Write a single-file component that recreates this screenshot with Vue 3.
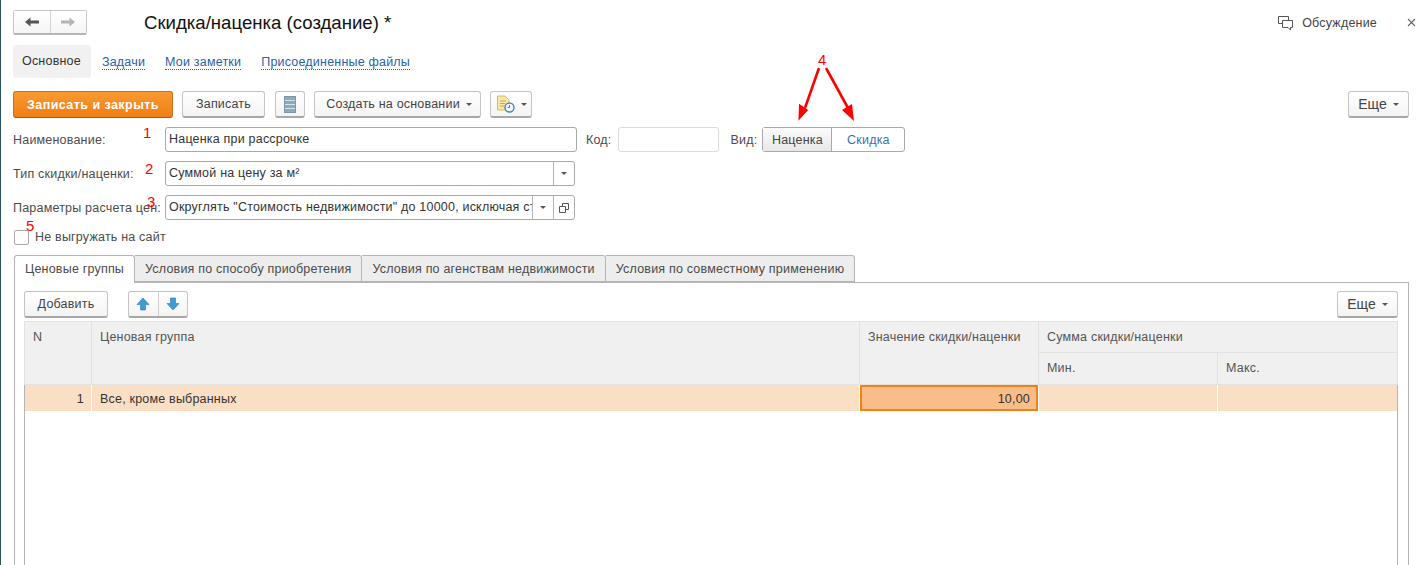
<template>
  <div class="page">
    <header class="title-row">
      <div class="nav-group">
        <button class="nav-btn">
          <svg width="16" height="12" viewBox="0 0 16 12"><path d="M1 6 6.5 1.5V4.5H15V7.5H6.5V10.500Z" fill="#555"/></svg>
        </button>
        <button class="nav-btn">
          <svg width="16" height="12" viewBox="0 0 16 12"><path d="M15 6 9.5 1.5V4.5H1V7.5H9.5V10.500Z" fill="#b4b4b4"/></svg>
        </button>
      </div>
      <h1 class="title">Скидка/наценка (создание) *</h1>
      <div class="discuss">
        <svg width="17" height="16" viewBox="0 0 17 16" fill="#fff" stroke="#555" stroke-width="1">
          <path d="M1.5 1.5H11.5V8.5H1.5Z"/>
          <path d="M5.5 5.5H15.5V12.5H13.5V15L11 12.5H5.5Z"/>
        </svg>
        <span>Обсуждение</span>
      </div>
      <svg class="close" width="9" height="9" viewBox="0 0 9 9"><path d="M1 1 8 8M8 1 1 8" stroke="#666" stroke-width="1.1"/></svg>
    </header>

    <nav class="sections">
      <span class="section active">Основное</span>
      <a v-for="link in links" :key="link" class="section link">{{ link }}</a>
    </nav>

    <div class="toolbar">
      <button class="btn primary">Записать и закрыть</button>
      <button class="btn save">Записать</button>
      <button class="btn icon-btn">
        <svg width="12" height="17" viewBox="0 0 12 17">
          <rect x="0.5" y="0.5" width="11" height="16" fill="#8eaabd" stroke="#7d98ac"/>
          <path d="M1 4.5H11M1 8.5H11M1 12.5H11" stroke="#d8e4ec" stroke-width="1"/>
        </svg>
      </button>
      <button class="btn create">Создать на основании<i class="caret"></i></button>
      <button class="btn report">
        <svg width="19" height="18" viewBox="0 0 19 18">
          <path d="M1.5 1H9L13 5V15H1.5Z" fill="#f8e7a8" stroke="#d8b860"/>
          <path d="M4 6H10M4 8.5H9M4 11H8" stroke="#c9a550"/>
          <circle cx="13.5" cy="12.5" r="4.500" fill="#f4f8fc" stroke="#4a86b8" stroke-width="1.4"/>
          <path d="M13.500 10V12.500" stroke="#d0473a"/>
          <path d="M13.500 12.500H11.500" stroke="#4a86b8"/>
        </svg>
        <i class="caret"></i>
      </button>
      <button class="btn more top-more">Еще<i class="caret"></i></button>
    </div>

    <div class="field-row">
      <label class="field-label">Наименование:</label>
      <div class="input name-input"><span>Наценка при рассрочке</span></div>
      <label class="code-label">Код:</label>
      <div class="input code-input"></div>
      <label class="kind-label">Вид:</label>
      <div class="toggle">
        <span class="toggle-item selected">Наценка</span>
        <span class="toggle-item">Скидка</span>
      </div>
    </div>

    <div class="field-row">
      <label class="field-label">Тип скидки/наценки:</label>
      <div class="input wide-input">
        <span class="value">Суммой на цену за м²</span>
        <span class="suffix"><i class="caret"></i></span>
      </div>
    </div>

    <div class="field-row">
      <label class="field-label">Параметры расчета цен:</label>
      <div class="input wide-input">
        <span class="value">Округлять "Стоимость недвижимости" до 10000, исключая стоимость</span>
        <span class="suffix"><i class="caret"></i></span>
        <span class="suffix">
          <svg width="10" height="10" viewBox="0 0 10 10" fill="#fff" stroke="#555">
            <path d="M3.5 .5H9.500V6.500H3.5Z"/>
            <path d="M.5 3.500H6.500V9.500H.5Z"/>
          </svg>
        </span>
      </div>
    </div>

    <div class="check-row">
      <span class="checkbox"></span>
      <span>Не выгружать на сайт</span>
    </div>

    <div class="tabs">
      <span v-for="(tab, i) in tabs" :key="tab" class="tab" :class="{ current: i === 0 }">{{ tab }}</span>
    </div>

    <section class="panel">
      <div class="panel-bar">
        <button class="btn add">Добавить</button>
        <div class="btn move-group">
          <span class="move">
            <svg width="14" height="14" viewBox="0 0 14 14"><path d="M7 1 13 7.500H9.500V13H4.500V7.500H1Z" fill="#3f9ad6" stroke="#2a7db8" stroke-width=".6"/></svg>
          </span>
          <span class="move">
            <svg width="14" height="14" viewBox="0 0 14 14"><path d="M7 13 13 6.500H9.500V1H4.500V6.500H1Z" fill="#3f9ad6" stroke="#2a7db8" stroke-width=".6"/></svg>
          </span>
        </div>
        <button class="btn more">Еще<i class="caret"></i></button>
      </div>

      <div class="grid">
        <div class="head c-n">N</div>
        <div class="head c-group">Ценовая группа</div>
        <div class="head c-value">Значение скидки/наценки</div>
        <div class="head c-sum">Сумма скидки/наценки</div>
        <div class="head c-min">Мин.</div>
        <div class="head c-max">Макс.</div>
        <div class="cell num">1</div>
        <div class="cell">Все, кроме выбранных</div>
        <div class="cell num focused">10,00</div>
        <div class="cell"></div>
        <div class="cell"></div>
      </div>
    </section>

    <!-- пометки красным поверх формы -->
    <span v-for="mark in marks" :key="mark.text" class="mark" :style="{ left: mark.x + 'px', top: mark.y + 'px' }">{{ mark.text }}</span>
    <svg class="arrows" width="80" height="60" viewBox="0 0 80 60">
      <path d="M23 2 9 42" stroke="#f00" stroke-width="2.6"/>
      <path d="M2.500 38 L12 43.500 L3 55Z" fill="#f00" transform="rotate(4 6 46)"/>
      <path d="M30 2 52 42" stroke="#f00" stroke-width="2.6"/>
      <path d="M46 44 56 38 58 55Z" fill="#f00"/>
    </svg>
  </div>
</template>

<script setup>
const links = ['Задачи', 'Мои заметки', 'Присоединенные файлы']
const tabs = [
  'Ценовые группы',
  'Условия по способу приобретения',
  'Условия по агенствам недвижимости',
  'Условия по совместному применению'
]
const marks = [
  { text: '1', x: 142, y: 125 },
  { text: '2', x: 144, y: 161 },
  { text: '3', x: 146, y: 194 },
  { text: '4', x: 817, y: 52 },
  { text: '5', x: 25, y: 218 }
]
</script>

<style>
html,
body {
  margin: 0;
  height: 100%;
  overflow: hidden;
  background: #fff;
}
</style>

<style scoped>
.page {
  position: relative;
  height: 565px;
  box-sizing: border-box;
  padding: 10px 14px 0 12px;
  border-left: 1px solid #2c4f6b;
  display: flex;
  flex-direction: column;
  font-family: "Liberation Sans", Arial, sans-serif;
  font-size: 12.5px;
  letter-spacing: 0.2px;
  color: #4b4b4b;
  background: #fff;
  overflow: hidden;
}

.title-row {
  display: flex;
  align-items: center;
  height: 25px;
}

.nav-group {
  display: flex;
  width: 74px;
  height: 25px;
  box-sizing: border-box;
  border: 1px solid #c8c8c8;
  border-bottom: 2px solid #b5b5b5;
  border-radius: 2px;
}

.nav-btn {
  flex: 1;
  padding: 0;
  border: 0;
  background: linear-gradient(#fff, #f5f5f5);
  display: flex;
  align-items: center;
  justify-content: center;
}

.nav-btn + .nav-btn {
  border-left: 1px solid #d4d4d4;
}

.title {
  margin: 0 0 0 57px;
  font-size: 18.6px;
  font-weight: 400;
  letter-spacing: 0;
  color: #111;
}

.discuss {
  margin-left: auto;
  display: flex;
  align-items: center;
  gap: 8px;
  color: #444;
}

.close {
  margin: 0 -7px 0 30px;
}

.sections {
  display: flex;
  align-items: center;
  height: 33px;
  margin-top: 10px;
}

.section {
  margin-right: 20px;
}

.section.active {
  margin-right: 11px;
  padding: 0 10px 0 9px;
  line-height: 33px;
  background: #f1f1f1;
  border-radius: 4px;
  color: #333;
}

.link {
  color: #2a5fa8;
  border-bottom: 1px dotted #2a5fa8;
  line-height: 14px;
  margin-top: 1px;
}

.toolbar {
  display: flex;
  align-items: center;
  gap: 9px;
  margin-top: 13px;
}

.btn {
  height: 27px;
  box-sizing: border-box;
  padding: 0;
  border: 1px solid #c4c4c4;
  border-bottom: 2px solid #a8a8a8;
  border-radius: 3px;
  background: linear-gradient(#fff, #f4f4f4);
  font: inherit;
  letter-spacing: inherit;
  color: #444;
  display: flex;
  align-items: center;
  justify-content: center;
}

.primary {
  width: 160px;
  border: 1px solid #c8701a;
  border-bottom: 1px solid #a85c12;
  background: linear-gradient(#fa9a32, #f07d14);
  color: #fff;
  font-weight: 700;
  letter-spacing: 0.45px;
}

.save {
  width: 83px;
}

.icon-btn {
  width: 30px;
  margin-left: 1px;
}

.create {
  width: 167px;
  padding-left: 3px;
}

.report {
  width: 42px;
}

.more {
  width: 61px;
  margin-left: auto;
  font-size: 14px;
  letter-spacing: 0;
}

.caret {
  display: inline-block;
  margin-left: 6px;
  border: 3px solid transparent;
  border-top-color: #555;
  border-bottom: 0;
}

.field-row {
  display: flex;
  align-items: center;
  height: 25px;
  margin-top: 9px;
}

.field-label {
  width: 152px;
  flex-shrink: 0;
  white-space: nowrap;
}

.input {
  height: 25px;
  box-sizing: border-box;
  border: 1px solid #a9a9a9;
  border-radius: 3px;
  background: #fff;
  display: flex;
  align-items: stretch;
  line-height: 23px;
  color: #333;
}

.input > span:first-child {
  padding-left: 3px;
}

.name-input {
  width: 412px;
}

.wide-input {
  width: 410px;
}

.value {
  flex: 1;
  min-width: 0;
  overflow: hidden;
  white-space: nowrap;
  padding-right: 4px;
}

.suffix {
  width: 20px;
  flex-shrink: 0;
  border-left: 1px solid #b5b5b5;
  display: flex;
  align-items: center;
  justify-content: center;
}

.suffix .caret {
  margin-left: 0;
}

.code-label {
  margin-left: 9px;
}

.code-input {
  width: 101px;
  margin-left: 6px;
  border-color: #dcdcdc;
}

.kind-label {
  margin-left: 12px;
}

.toggle {
  display: flex;
  width: 143px;
  height: 25px;
  box-sizing: border-box;
  margin-left: 5px;
  border: 1px solid #a9a9a9;
  border-radius: 3px;
}

.toggle-item {
  flex: 1;
  display: flex;
  align-items: center;
  justify-content: center;
  color: #3a72a8;
}

.toggle-item.selected {
  flex: none;
  width: 68px;
  border-right: 1px solid #a9a9a9;
  background: linear-gradient(#fbfbfb, #e8e8e8);
  color: #444;
}

.check-row {
  display: flex;
  align-items: center;
  gap: 6px;
  height: 16px;
  margin: 9px 0 0 1px;
}

.checkbox {
  width: 15px;
  height: 15px;
  box-sizing: border-box;
  border: 1px solid #a9a9a9;
  border-radius: 2px;
}

.tabs {
  display: flex;
  margin-top: 10px;
  margin-left: 1px;
  height: 28px;
  position: relative;
  z-index: 1;
}

.tab {
  box-sizing: border-box;
  height: 27px;
  line-height: 26px;
  padding: 0 10px;
  border: 1px solid #b5b5b5;
  border-left-width: 0;
  border-radius: 0 3px 0 0;
  background: #ededed;
  white-space: nowrap;
}

.tab.current {
  height: 28px;
  width: 121px;
  border-left-width: 1px;
  border-bottom: 0;
  border-radius: 3px 3px 0 0;
  background: #fff;
}

.panel {
  flex: 1;
  min-height: 0;
  margin: -1px 0 0 1px;
  padding: 8px 10px 0 9px;
  border: 1px solid #b5b5b5;
  border-bottom: 0;
  display: flex;
  flex-direction: column;
}

.panel-bar {
  display: flex;
  align-items: center;
}

.add {
  width: 84px;
}

.move-group {
  width: 60px;
  margin-left: 20px;
}

.move {
  flex: 1;
  height: 100%;
  display: flex;
  align-items: center;
  justify-content: center;
}

.move + .move {
  border-left: 1px solid #d0d0d0;
}

.grid {
  flex: 1;
  margin-top: 3px;
  border: 1px solid #b5b5b5;
  border-bottom: 0;
  display: grid;
  grid-template-columns: 66px 767px 178px 178px 1fr;
  grid-template-rows: 30px 31px 26px 1fr;
  gap: 1px;
  align-content: start;
}

.head {
  background: #f0f0f0;
  padding: 8px 8px 0;
  color: #555;
  outline: 1px solid #e2e2e2;
}

.c-n,
.c-group,
.c-value {
  grid-row: 1 / 3;
}

.c-sum {
  grid-column: 4 / 6;
}

.c-min {
  grid-column: 4;
}

.c-max {
  grid-column: 5;
}

.cell {
  background: #fbdfc5;
  padding: 0 8px;
  line-height: 28px;
  color: #333;
}

.num {
  text-align: right;
  padding-right: 7px;
}

.focused {
  background: #f9bd8a;
  box-shadow: inset 0 0 0 2px #f08214;
  padding-right: 8px;
}

.mark {
  position: absolute;
  color: #f00;
  font-size: 15px;
  line-height: 16px;
  letter-spacing: 0;
}

.arrows {
  position: absolute;
  left: 795px;
  top: 66px;
  pointer-events: none;
}
</style>
